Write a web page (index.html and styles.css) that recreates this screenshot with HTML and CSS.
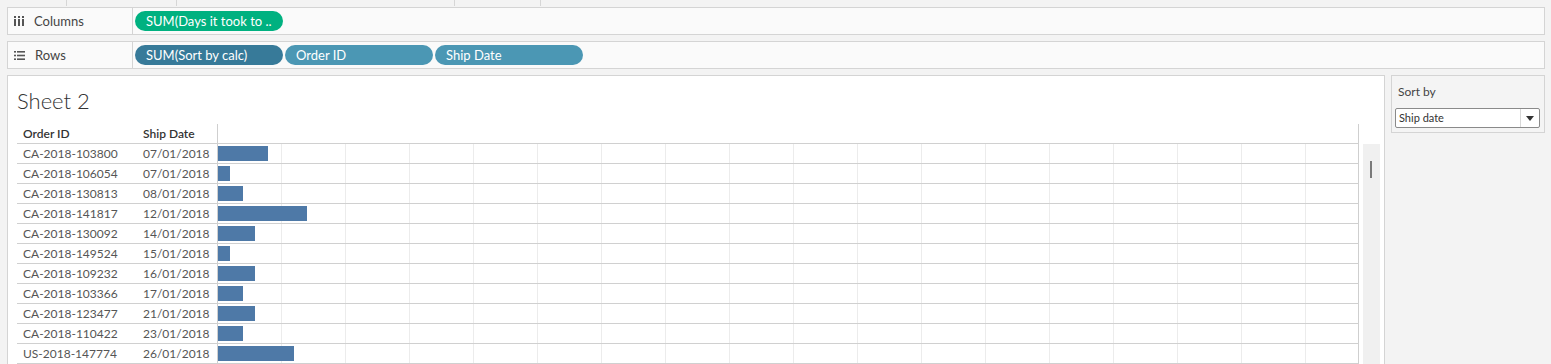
FILE: index.html
```html
<!DOCTYPE html>
<html lang="en">
<head>
    <meta charset="UTF-8">
    <title>Sheet 2</title>
    <link rel="stylesheet" href="styles.css">
</head>
<body>
    <div class="tabs">
        <span class="tab tab-1"></span>
        <span class="tab tab-2"></span>
        <span class="tab tab-3"></span>
        <span class="tab tab-4"></span>
    </div>

    <!-- shelves -->
    <div class="shelf">
        <div class="shelf-label">
            <svg class="shelf-icon" width="10" height="10" viewBox="0 0 10 10">
                <rect x="0" y="0" width="2" height="2" fill="#555"/>
                <rect x="4" y="0" width="2" height="2" fill="#555"/>
                <rect x="8" y="0" width="2" height="2" fill="#555"/>
                <rect x="0" y="3" width="2" height="7" fill="#555"/>
                <rect x="4" y="3" width="2" height="7" fill="#555"/>
                <rect x="8" y="3" width="2" height="7" fill="#555"/>
            </svg>
            Columns
        </div>
        <div class="shelf-pills">
            <span class="pill pill-green">SUM(Days it took to ..</span>
        </div>
    </div>

    <div class="shelf">
        <div class="shelf-label">
            <svg class="shelf-icon" width="11" height="9" viewBox="0 0 11 9">
                <rect x="0" y="0" width="2" height="1.6" fill="#555"/>
                <rect x="3" y="0" width="8" height="1.6" fill="#555"/>
                <rect x="0" y="3.7" width="2" height="1.6" fill="#555"/>
                <rect x="3" y="3.7" width="8" height="1.6" fill="#555"/>
                <rect x="0" y="7.4" width="2" height="1.6" fill="#555"/>
                <rect x="3" y="7.4" width="8" height="1.6" fill="#555"/>
            </svg>
            Rows
        </div>
        <div class="shelf-pills">
            <span class="pill pill-dark">SUM(Sort by calc)</span>
            <span class="pill pill-blue">Order ID</span>
            <span class="pill pill-blue">Ship Date</span>
        </div>
    </div>

    <div class="main">
        <div class="sheet">
            <h1 class="sheet-title">Sheet 2</h1>
            <div class="sheet-body">
                <div class="table" id="table">
                    <div class="row head">
                        <div class="cell col-id">Order ID</div>
                        <div class="cell col-date">Ship Date</div>
                        <div class="cell col-bar"></div>
                    </div>
                </div>
                <div class="scrollbar"><span class="thumb"></span></div>
            </div>
        </div>

        <div class="sort-panel">
            <div class="sort-title">Sort by</div>
            <div class="select">
                <span class="select-text">Ship date</span>
                <span class="select-arrow">
                    <svg width="8" height="5" viewBox="0 0 8 5"><path d="M0 0 L8 0 L4 5 Z" fill="#333"/></svg>
                </span>
            </div>
        </div>
    </div>

    <script>
        var rows = [
            ["CA-2018-103800", "07/01/2018", 50],
            ["CA-2018-106054", "07/01/2018", 12],
            ["CA-2018-130813", "08/01/2018", 25],
            ["CA-2018-141817", "12/01/2018", 89],
            ["CA-2018-130092", "14/01/2018", 37],
            ["CA-2018-149524", "15/01/2018", 12],
            ["CA-2018-109232", "16/01/2018", 37],
            ["CA-2018-103366", "17/01/2018", 25],
            ["CA-2018-123477", "21/01/2018", 37],
            ["CA-2018-110422", "23/01/2018", 25],
            ["US-2018-147774", "26/01/2018", 76]
        ];

        var table = document.getElementById("table");
        for (var i = 0; i < rows.length; i++) {
            var row = document.createElement("div");
            row.className = "row";
            row.innerHTML =
                '<div class="cell col-id">' + rows[i][0] + '</div>' +
                '<div class="cell col-date">' + rows[i][1] + '</div>' +
                '<div class="cell col-bar grid"><span class="bar" style="width:' + rows[i][2] + 'px"></span></div>';
            table.appendChild(row);
        }
    </script>
</body>
</html>
```

FILE: styles.css
```css
body {
    margin: 0;
    padding: 0;
    height: 364px;
    overflow: hidden;
    background-color: #f3f3f3;
    font-family: Lato, "Open Sans", sans-serif;
    font-size: 12px;
    color: #333;
}

/* top tab strip */
.tabs {
    display: flex;
    height: 7px;
}

.tab {
    border-right: 1px solid #d6d6d6;
    height: 6px;
}

.tab-1 { width: 66px; }
.tab-2 { width: 109px; }
.tab-3 { width: 277px; }
.tab-4 { width: 85px; }

/* shelves */
.shelf {
    display: flex;
    height: 28px;
    box-sizing: border-box;
    margin: 0 6px 6px 7px;
    background-color: #fafafa;
    border: 1px solid #d4d4d4;
}

.shelf-label {
    display: flex;
    align-items: center;
    width: 125px;
    padding-left: 6px;
    box-sizing: border-box;
    border-right: 1px solid #d4d4d4;
    font-size: 13px;
    color: #444;
}

.shelf-icon {
    margin-right: 10px;
}

.shelf-pills {
    display: flex;
    align-items: center;
    padding-left: 2px;
    gap: 2px;
}

.pill {
    display: block;
    width: 148px;
    height: 20px;
    line-height: 20px;
    box-sizing: border-box;
    padding-left: 11px;
    border-radius: 10px;
    font-size: 13px;
    color: #fff;
    white-space: nowrap;
}

.pill-green { background-color: #00b180; }
.pill-dark { background-color: #377a99; }
.pill-blue { background-color: #4b97b4; }

/* main area */
.main {
    display: flex;
    gap: 6px;
    margin-left: 7px;
}

.sheet {
    width: 1378px;
    height: 300px;
    box-sizing: border-box;
    background-color: #fff;
    border: 1px solid #d4d4d4;
    padding: 0 4px 0 9px;
}

.sheet-title {
    margin: 0;
    padding-top: 13px;
    height: 35px;
    font-size: 22px;
    line-height: 24px;
    font-weight: 300;
    color: #333;
}

.sheet-body {
    display: flex;
    gap: 4px;
}

.table {
    width: 1342px;
}

.row {
    display: flex;
    height: 20px;
    box-sizing: border-box;
    border-bottom: 1px solid #d0d0d0;
}

.cell {
    line-height: 19px;
    white-space: nowrap;
    color: #555;
}

.head .cell {
    color: #333;
    font-weight: 600;
}

.col-id {
    width: 120px;
    padding-left: 6px;
    box-sizing: border-box;
}

.col-date {
    width: 81px;
    padding-left: 6px;
    box-sizing: border-box;
    border-right: 1px solid #cfcfcf;
}

.col-bar {
    flex: 1;
    border-right: 1px solid #cfcfcf;
}

.grid {
    background-image: repeating-linear-gradient(to right, transparent 0, transparent 63px, #ececec 63px, #ececec 64px);
}

.bar {
    display: block;
    height: 15px;
    margin-top: 2px;
    background-color: #4e79a7;
}

.scrollbar {
    position: relative;
    width: 17px;
    margin-top: 20px;
    height: 240px;
    background-color: #f0f0f0;
}

.thumb {
    position: absolute;
    left: 7px;
    top: 17px;
    width: 2px;
    height: 17px;
    background-color: #7a7a7a;
}

/* sort panel */
.sort-panel {
    width: 154px;
    height: 58px;
    box-sizing: border-box;
    border: 1px solid #d4d4d4;
    background-color: #f4f4f4;
    padding: 8px 4px 0 3px;
}

.sort-title {
    padding-left: 3px;
    line-height: 16px;
    color: #444;
    margin-bottom: 8px;
}

.select {
    display: flex;
    height: 20px;
    box-sizing: border-box;
    border: 1px solid #8a8a8a;
    border-radius: 2px;
    background-color: #fff;
}

.select-text {
    flex: 1;
    padding-left: 3px;
    line-height: 18px;
    font-size: 11px;
    color: #333;
}

.select-arrow {
    width: 18px;
    border-left: 1px solid #d8d8d8;
    display: flex;
    align-items: center;
    justify-content: center;
}
```
